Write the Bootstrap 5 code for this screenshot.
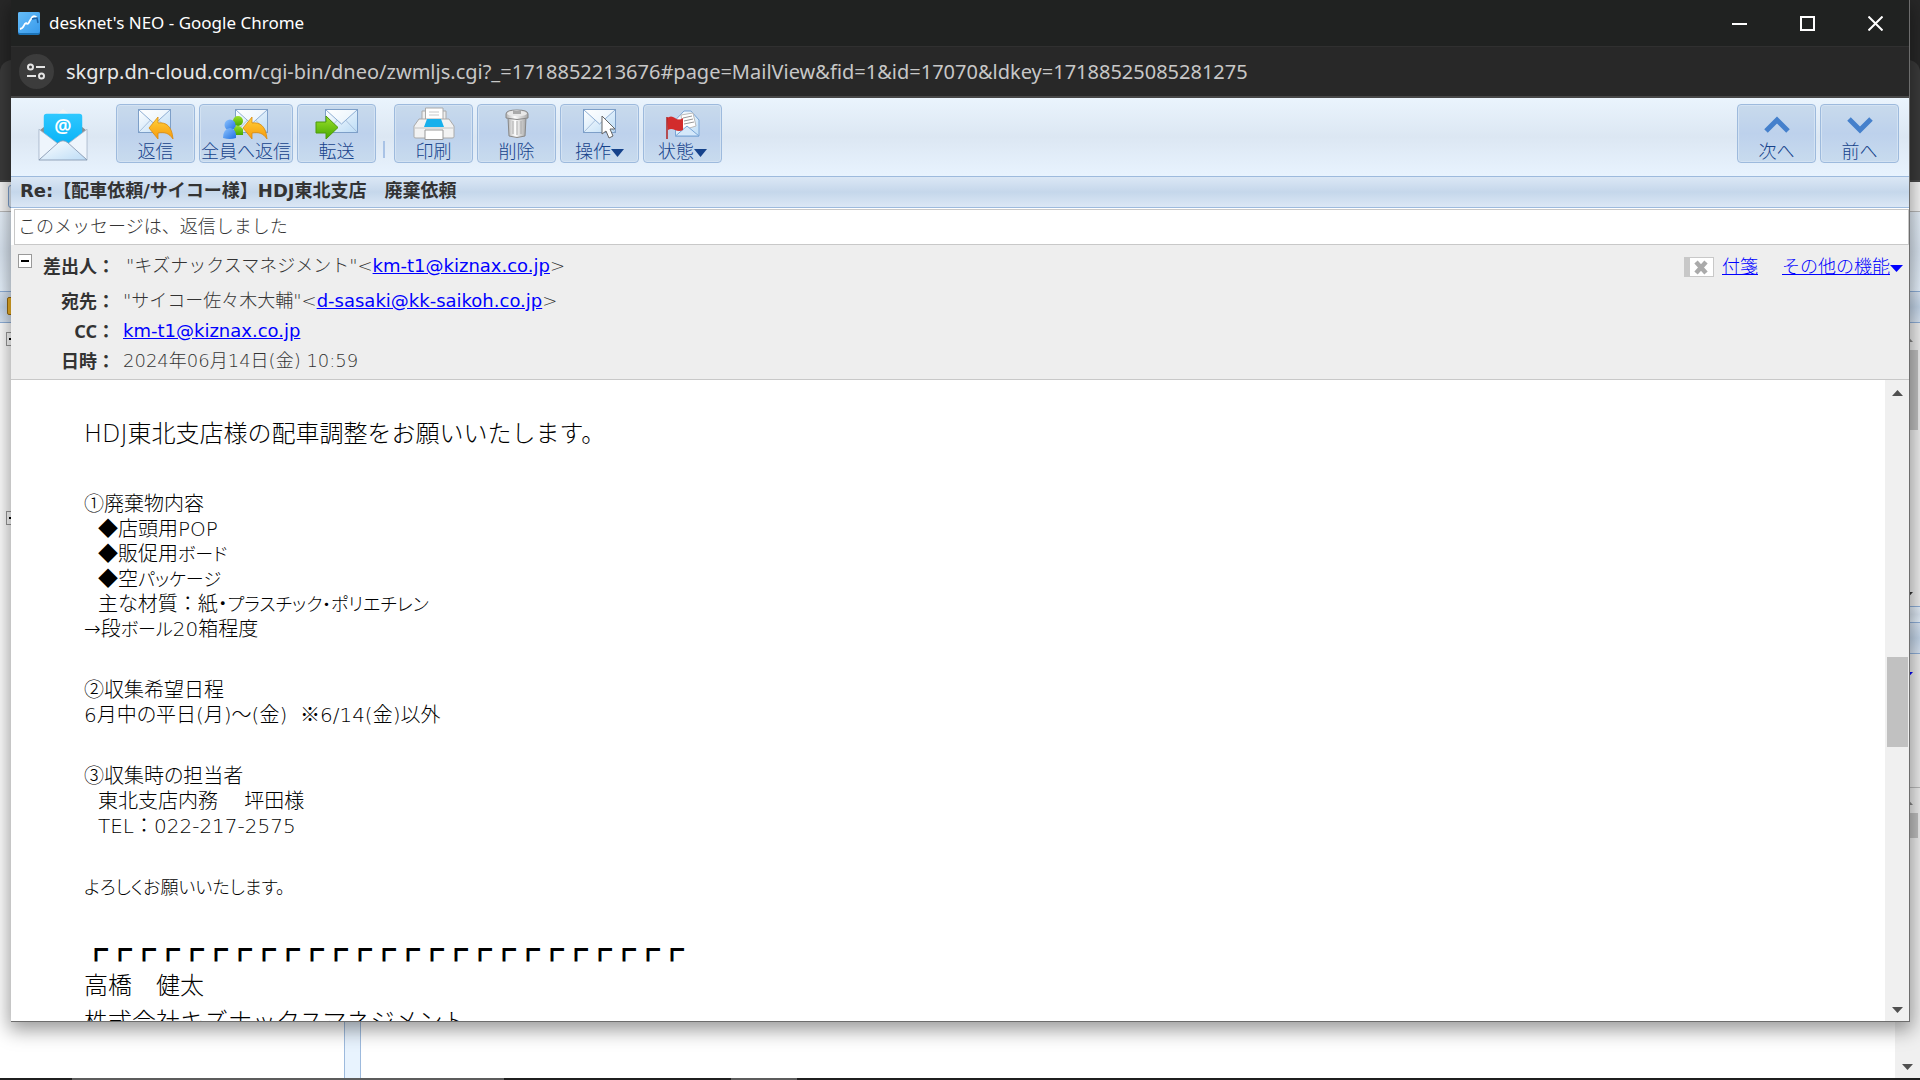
<!DOCTYPE html>
<html lang="ja">
<head>
<meta charset="utf-8">
<meta name="viewport" content="width=device-width, initial-scale=1">
<title>desknet's NEO</title>
<link href="https://cdn.jsdelivr.net/npm/bootstrap@5.3.0/dist/css/bootstrap.min.css" rel="stylesheet">
<style>
  body { font-family: "Noto Sans", "Noto Sans CJK JP", sans-serif; font-size: 18px; line-height: 24px; color: #333; background: #fff; }
  svg { display: block; flex: none; }

  /* windows behind the popup */
  .back-top { height: 182px; padding-top: 60px; background: #282828; }
  .back-tab { background: #3b3b3b; border-bottom: 2px solid #4a4a4a; border-radius: 12px 12px 0 0; }
  .back-strip { height: 30px; padding: 3px 8px; background: #f8f8f8; border-bottom: 1px solid #bbb; }
  .back-chip { width: 24px; border: 1px solid #7fa3d0; border-radius: 3px; background: #e4eefa; }
  .back-tools { height: 79px; background: linear-gradient(#e8f2fc, #dce7f3 50%, #e8f3fe); }
  .back-bar { height: 32px; padding: 5px 7px; border: solid #8fb0da; border-width: 1px 0; background: linear-gradient(#dbe7f5, #c5d7eb 50%, #dbe7f5); }
  .back-folder { width: 12px; height: 18px; border: 1px solid #9a6a10; border-radius: 2px; background: #f0b428; }
  .back-tree { width: 344px; padding: 9px 6px; }
  .back-split { width: 17px; background: #e8f3fe; border: solid #9dbadd; border-width: 0 1px; }
  .back-scroll { width: 25px; background: #f0f0f0; }
  .back-thumb { margin-right: 2px; background: #c1c1c1; }
  .back-list { height: 176px; padding: 0 7px 8px; }
  .back-head { height: 134px; padding-top: 18px; background: #eee; border-bottom: 1px solid #bbb; }
  .task-strip { height: 2px; background: #1f1f1f; }
  .task-strip div { background: #5c5c5c; }

  .tree-box { width: 14px; height: 14px; padding: 0; border: 1px solid #999; background: #fff; }
  .tree-box svg { margin: 5px auto; }

  /* popup window */
  .popup { top: 0; left: 11px; right: 10px; bottom: 58px; background: #fff; border: solid #6d6d6d; border-width: 0 1px 1px 0; box-shadow: 0 6px 18px 2px rgba(0,0,0,.4); }
  .popup > * { flex-shrink: 0; }
  .title-row { height: 46px; padding-left: 6px; background: #202221; color: #fff; }
  .title-row .caption { font: 17px/24px "Noto Sans", sans-serif; }
  .win-btn { width: 68px; height: 45px; padding: 0; border: 0; background: none; }
  .url-row { height: 52px; padding: 0 8px; background: #282828; border-top: 1px solid #303030; border-bottom: 2px solid #474747; }
  .site-btn { width: 35px; height: 35px; padding: 0; border: 0; background: #3c3c3c; }
  .url-box { border: 0; background: none; color: #c7c7c7; font: 20px/28px "Noto Sans", sans-serif; }
  .url-box b { font-weight: 400; color: #e8e8e8; }

  .tools { height: 79px; padding: 6px 10px 0 27px; border-bottom: 1px solid #9dbadd; background: linear-gradient(#eaf4fd, #dce7f3 50%, #e8f3fe); }
  .tool-btn { min-width: 79px; height: 59px; padding: 1px 1px 0; border: 1px solid #9dbadd; border-radius: 4px; background: linear-gradient(#c8daec, #bdd1ec 50%, #c8dbee); box-shadow: inset 0 0 0 1px #d3e2f2; color: #15428b; font-size: 18px; line-height: 22px; font-weight: 300; }
  .tool-sep { width: 2px; height: 17px; margin: 37px 9px 0 7px; background: #a9c3e6; }
  .subject { height: 31px; padding: 0 9px; border-bottom: 1px solid #9dbadd; background: linear-gradient(#dbe7f5, #c5d7eb 50%, #dbe7f5); font: 700 18px/27px "DejaVu Sans", "Noto Sans CJK JP", sans-serif; color: #333; margin: 0; }
  .notice { height: 36px; margin: 1px 0 0 3px; padding: 0 3px; border: 1px solid #c8c8c8; line-height: 32px; font-weight: 300; }

  .head { background: #eee; border-bottom: 1px solid #c8c8c8; padding: 9px 6px 0 7px; font-weight: 300; }
  .head table { margin: 0 0 0 7px; }
  .head th, .head td { padding: 0 0 6px; font-weight: 300; }
  .head th { text-align: right; font-weight: 700; padding-right: 8px; width: 84px; }
  .head tr:first-child > * { padding-bottom: 11px; }
  .head tr:first-child td { padding-left: 3px; }
  .head td { font-family: "DejaVu Sans", "Noto Sans CJK JP", sans-serif; }
  .head a { color: #00f; }
  .head td a { font-weight: 400; }
  .tag-icon { margin: 3px 8px 0 0; }

  .mail { padding: 36px 73px 0; font: 300 20px/25px "DejaVu Sans", "Noto Sans CJK JP", sans-serif; color: #000; font-feature-settings: "palt"; }
  .mail p { margin: 0 0 36px; }
  .mail .big { font-size: 24px; line-height: 36px; font-feature-settings: normal; }
  .mail .open { margin-bottom: 40px; }
  .mail .thanks { font-size: 18px; margin-bottom: 32px; }
  .mail .indent { padding-left: 14px; display: block; }
  .mail .kana { font-size: 18px; line-height: 20px; }
  .mail .wide { font-family: "Noto Sans CJK JP", sans-serif; line-height: 20px; font-feature-settings: normal; }
  .pane-scroll { width: 24px; background: #f0f0f0; padding: 10px 0 8px; }
  .pane-thumb { width: 21px; height: 90px; background: #c1c1c1; }
</style>
<script src="https://cdn.jsdelivr.net/npm/bootstrap@5.3.0/dist/js/bootstrap.bundle.min.js"></script>
</head>
<body class="vh-100 overflow-hidden position-relative">

<svg width="0" height="0" class="position-absolute" aria-hidden="true">
  <defs>
    <linearGradient id="gEnv" x1="0" y1="0" x2="1" y2="1"><stop offset="0" stop-color="#fff"/><stop offset="1" stop-color="#bcdcf6"/></linearGradient>
    <linearGradient id="gOr" x1="0" y1="0" x2="0" y2="1"><stop offset="0" stop-color="#ffd23c"/><stop offset="1" stop-color="#f79a0c"/></linearGradient>
    <linearGradient id="gGr" x1="0" y1="0" x2="0" y2="1"><stop offset="0" stop-color="#9be02a"/><stop offset="1" stop-color="#45a800"/></linearGradient>
    <linearGradient id="gBl" x1="0" y1="0" x2="1" y2="1"><stop offset="0" stop-color="#8fc4ff"/><stop offset="1" stop-color="#1f6fe0"/></linearGradient>
    <linearGradient id="gMetal" x1="0" y1="0" x2="1" y2="0"><stop offset="0" stop-color="#b4b4b4"/><stop offset=".4" stop-color="#fff"/><stop offset="1" stop-color="#a8a8a8"/></linearGradient>
    <linearGradient id="gCy" x1="0" y1="0" x2="0" y2="1"><stop offset="0" stop-color="#2fc8ff"/><stop offset="1" stop-color="#00aef5"/></linearGradient>
    <g id="env">
      <rect x=".5" y=".5" width="32" height="23" fill="url(#gEnv)" stroke="#7d9fc8"/>
      <path d="M1 23 12.500 11M32 23 20.500 11" stroke="#a8c0dc" fill="none"/>
      <path d="M1 1 16.500 15 32 1" fill="#fff" fill-opacity=".5" stroke="#8fafd4"/>
    </g>
    <path id="back" d="M0 11 9 0V6C17 5 23 9 24 22 20 16 16 15 9 16V22Z" fill="url(#gOr)" stroke="#d98a10" stroke-width=".8"/>
  </defs>
</svg>

<!-- windows behind -->
<div class="h-100 d-flex flex-column" aria-hidden="true">
  <div class="back-top d-flex"><div class="back-tab flex-fill"></div></div>
  <div class="back-strip d-flex"><div class="back-chip"></div></div>
  <div class="back-tools"></div>
  <div class="back-bar"><div class="back-folder"></div></div>
  <div class="flex-fill d-flex">
    <div class="back-tree">
      <div class="tree-box"><svg width="8" height="2"><path d="M0 1H8" stroke="#000" stroke-width="2"/></svg></div>
      <div class="tree-box" style="margin-top:165px"><svg width="8" height="2"><path d="M0 1H8" stroke="#000" stroke-width="2"/></svg></div>
    </div>
    <div class="back-split"></div>
    <div class="flex-fill"></div>
    <div class="back-scroll d-flex flex-column">
      <svg class="mx-auto" style="margin-top:13px" width="11" height="6"><path d="M0 6H11L5.500 0Z" fill="#888"/></svg>
      <div class="back-thumb mt-2" style="height:80px"></div>
      <div class="back-list d-flex align-items-end"><svg width="11" height="6"><path d="M0 0H11L5.500 6Z" fill="#333"/></svg></div>
      <div class="back-tools" style="height:16px;border-top:1px solid #8fb0da"></div>
      <div class="back-bar"></div>
      <div class="back-head"><svg class="mx-auto" width="11" height="6"><path d="M0 0H11L5.500 6Z" fill="#00f"/></svg></div>
      <svg class="mx-auto" style="margin-top:11px" width="11" height="6"><path d="M0 6H11L5.500 0Z" fill="#888"/></svg>
      <div class="back-thumb mt-2" style="height:25px"></div>
      <svg class="mt-auto mb-2 mx-auto" width="11" height="6"><path d="M0 0H11L5.500 6Z" fill="#505050"/></svg>
    </div>
  </div>
  <div class="task-strip d-flex">
    <div style="width:432px;margin-left:72px"></div>
    <div style="width:66px;margin-left:227px"></div>
  </div>
</div>

<!-- popup -->
<div class="popup position-absolute d-flex flex-column">
  <header class="title-row d-flex align-items-center">
    <svg width="24" height="25" viewBox="0 0 24 25"><rect x="1" y="1" width="22" height="23" rx="2" fill="#1c74b8"/><rect x="1" y="1" width="22" height="21" rx="2" fill="url(#gBl)"/><rect x="1" y="1" width="22" height="21" rx="2" fill="#49b8f4" fill-opacity=".6"/><path d="M3 18C8 17 6 13 9 12 12 14 11 12 14 8 16 4 18 5 20 7" fill="none" stroke="#fff" stroke-width="1.800"/><path d="M15 8 20 7 21 12" fill="none" stroke="#1c63a8" stroke-width="1.500"/></svg>
    <span class="caption ms-2 flex-fill">desknet's NEO - Google Chrome</span>
    <button class="win-btn" aria-label="最小化"><svg class="mx-auto" width="15" height="15"><path d="M0 8H15" stroke="#fff" stroke-width="2"/></svg></button>
    <button class="win-btn" aria-label="最大化"><svg class="mx-auto" width="15" height="15"><rect x="1" y="1" width="13" height="13" fill="none" stroke="#fff" stroke-width="2"/></svg></button>
    <button class="win-btn" aria-label="閉じる"><svg class="mx-auto" width="15" height="15"><path d="M.5.5 14.500 14.500M14.500.5.5 14.500" stroke="#fff" stroke-width="2"/></svg></button>
  </header>

  <div class="url-row d-flex align-items-center">
    <button class="site-btn rounded-circle" aria-label="サイト情報"><svg class="mx-auto" width="19" height="17" viewBox="0 0 19 17"><g fill="none" stroke="#e4e4e4" stroke-width="2"><circle cx="3.500" cy="4" r="2.500"/><path d="M9 4H18M0 13H9"/><circle cx="14.500" cy="13" r="2.500"/></g></svg></button>
    <div class="url-box ms-2 ps-1 text-nowrap"><b>skgrp.dn-cloud.com</b>/cgi-bin/dneo/zwmljs.cgi?_=1718852213676#page=MailView&amp;fid=1&amp;id=17070&amp;ldkey=17188525085281275</div>
  </div>

  <nav class="tools d-flex align-items-start">
    <svg class="mt-1 me-4" width="50" height="54" viewBox="0 0 52 54">
      <path d="M2 22 8 17 26 2 44 17 50 22 40 36H12Z" fill="#8c8c8c"/>
      <path d="M19 6 26 0 33 6Z" fill="#f4f4f4"/>
      <path d="M6 8Q6 5 9 5H43Q46 5 46 8V26L30 44H22L6 26Z" fill="url(#gCy)"/>
      <path d="M1 21 22 37 1 53ZM51 21 30 37 51 53Z" fill="#eef5fc" stroke="#9fb0c6" stroke-width=".8"/>
      <path d="M1 53 21 35Q26 31 31 35L51 53Z" fill="url(#gEnv)" stroke="#8798b0" stroke-width=".9"/>
      <text x="26" y="25" text-anchor="middle" font-family="Noto Sans, sans-serif" font-size="20" font-weight="600" fill="#fff">@</text>
    </svg>
    <div class="d-flex gap-1 ms-1">
      <button class="tool-btn"><svg class="mx-auto" width="38" height="34" viewBox="0 0 38 34"><use href="#env" x="1" y="3"/><use href="#back" x="12" y="11"/></svg>返信</button>
      <button class="tool-btn"><svg class="mx-auto" width="46" height="34" viewBox="0 0 46 34"><use href="#env" x="12" y="3"/><circle cx="15" cy="15" r="5" fill="url(#gGr)"/><path d="M11 22Q15 17 20 23V29H11Z" fill="url(#gGr)"/><circle cx="7" cy="19" r="5.500" fill="url(#gBl)"/><path d="M0 32Q0 23 7 22 14 23 13 32 7 34 0 32Z" fill="url(#gBl)"/><use href="#back" x="20" y="11"/></svg>全員へ返信</button>
      <button class="tool-btn"><svg class="mx-auto" width="44" height="34" viewBox="0 0 44 34"><use href="#env" x="10" y="3"/><path d="M1 16H11V10L23 21.500 11 33V27H1Z" fill="url(#gGr)" stroke="#4d9a0c"/></svg>転送</button>
    </div>
    <div class="tool-sep"></div>
    <div class="d-flex gap-1">
      <button class="tool-btn"><svg class="mx-auto" width="42" height="34" viewBox="0 0 42 34"><path d="M9 5H33V14H9Z" fill="#eee" stroke="#aaa"/><path d="M12.500 2H30V14H12.500Z" fill="#fff" stroke="#aaa"/><path d="M16 6H26M16 9H26" stroke="#c8c8c8"/><path d="M6 13H36L41 20V31Q41 32 39 32H3Q1 32 1 31V20Z" fill="#f2f2f2" stroke="#aaa"/><path d="M14 13H28L31 21H11Z" fill="#18b0ec"/><path d="M2 22H40" stroke="#c4c4c4"/><path d="M12 24H30V33.500H12Z" fill="#fff" stroke="#999"/></svg>印刷</button>
      <button class="tool-btn"><svg class="mx-auto" width="26" height="34" viewBox="0 0 26 34"><path d="M4 12H22L21 30Q13 33 5 30Z" fill="url(#gMetal)" stroke="#888"/><path d="M9 15V28M13 15V29M17 15V28" stroke="#aaa"/><path d="M2 8Q2 4 13 4T24 8V12Q13 15 2 12Z" fill="url(#gMetal)" stroke="#888"/><ellipse cx="13" cy="7.500" rx="10" ry="2.800" fill="#e8e8e8"/><path d="M9 5H17V8H9Z" fill="#aaa"/></svg>削除</button>
      <button class="tool-btn"><svg class="mx-auto" width="36" height="34" viewBox="0 0 36 34"><use href="#env" x="1" y="3"/><path d="M20 10V28L24 25 27 32 31 30 28 23H33Z" fill="#fff" stroke="#666"/></svg>操作<svg class="d-inline-block" width="13" height="8"><path d="M0 0H13L6.500 8Z" fill="#15428b"/></svg></button>
      <button class="tool-btn"><svg class="mx-auto" width="34" height="34" viewBox="0 0 34 34"><path d="M9.500 14 18 5H25L33 14V30H9.500Z" fill="url(#gEnv)" stroke="#7aa5d6"/><path d="M15 9 27 7 30 20 17 24Z" fill="#fff" stroke="#bbb"/><path d="M17 12 26 10M18 15 27 13M18 18 28 16" stroke="#999"/><path d="M9.500 30 21 20 33 30Z" fill="#d4e8fa" stroke="#7aa5d6"/><path d="M1 12Q5 9 9 12T17 12V24Q13 26 9 24T2 24Z" fill="#d22c2c"/><path d="M1 11V33" stroke="#b02020" stroke-width="1.500"/></svg>状態<svg class="d-inline-block" width="13" height="8"><path d="M0 0H13L6.500 8Z" fill="#15428b"/></svg></button>
    </div>
    <div class="d-flex gap-1 ms-auto">
      <button class="tool-btn"><svg class="mx-auto" width="26" height="34"><path d="M2 25 13 14 24 25" fill="none" stroke="#4580cc" stroke-width="5"/></svg>次へ</button>
      <button class="tool-btn"><svg class="mx-auto" width="26" height="34"><path d="M2 13 13 24 24 13" fill="none" stroke="#4580cc" stroke-width="5"/></svg>前へ</button>
    </div>
  </nav>

  <h1 class="subject text-nowrap">Re:【配車依頼/サイコー様】HDJ東北支店　廃棄依頼</h1>
  <div class="notice">このメッセージは、返信しました</div>

  <section class="head d-flex align-items-start">
    <button class="tree-box" aria-label="閉じる"><svg width="8" height="2"><path d="M0 1H8" stroke="#000" stroke-width="2"/></svg></button>
    <table>
      <tr><th scope="row">差出人：</th><td>"キズナックスマネジメント"&lt;<a href="#">km-t1@kiznax.co.jp</a>&gt;</td></tr>
      <tr><th scope="row">宛先：</th><td>"サイコー佐々木大輔"&lt;<a href="#">d-sasaki@kk-saikoh.co.jp</a>&gt;</td></tr>
      <tr><th scope="row">CC：</th><td><a href="#">km-t1@kiznax.co.jp</a></td></tr>
      <tr><th scope="row">日時：</th><td>2024年06月14日(金) 10:59</td></tr>
    </table>
    <div class="ms-auto d-flex">
      <svg class="tag-icon" width="30" height="20"><path d="M0 0H30V20H0Z" fill="#c8c8c8"/><path d="M6 1H29V19H6Z" fill="#fff"/><path d="M12 5 22 16M22 5 12 16" stroke="#aaa" stroke-width="4.500"/></svg>
      <a href="#" class="me-4">付箋</a>
      <a href="#" class="text-nowrap">その他の機能<svg class="d-inline-block" width="13" height="7"><path d="M0 0H13L6.500 7Z" fill="#00f"/></svg></a>
    </div>
  </section>

  <div class="flex-fill flex-shrink-1 d-flex overflow-hidden" style="min-height:0">
    <article class="mail flex-fill">
      <p class="big open">HDJ東北支店様の配車調整をお願いいたします。</p>
      <p>①廃棄物内容<span class="indent">◆店頭用POP</span><span class="indent">◆販促用<span class="kana">ボード</span></span><span class="indent">◆空<span class="kana">パッケージ</span></span><span class="indent">主な材質<span class="wide">：</span>紙・<span class="kana">プラスチック・ポリエチレン</span></span>→段<span class="kana">ボール</span>20箱程度</p>
      <p>②収集希望日程<br>6月中の平日(月)～(金)&nbsp; <span class="wide">※</span>6/14(金)以外</p>
      <p>③収集時の担当者<span class="indent">東北支店内務　 坪田様</span><span class="indent">TEL<span class="wide">：</span>022-217-2575</span></p>
      <p class="thanks">よろしくお願いいたします。</p>
      <p class="big text-nowrap">┏┏┏┏┏┏┏┏┏┏┏┏┏┏┏┏┏┏┏┏┏┏┏┏┏<br>高橋　健太<br>株式会社キズナックスマネジメント</p>
    </article>
    <div class="pane-scroll d-flex flex-column align-items-center">
      <svg width="11" height="6"><path d="M0 6H11L5.500 0Z" fill="#505050"/></svg>
      <div class="flex-fill d-flex flex-column">
        <div style="flex:260 1 0"></div>
        <div class="pane-thumb"></div>
        <div style="flex:259 1 0"></div>
      </div>
      <svg width="11" height="6"><path d="M0 0H11L5.500 6Z" fill="#505050"/></svg>
    </div>
  </div>
</div>
</body>
</html>
